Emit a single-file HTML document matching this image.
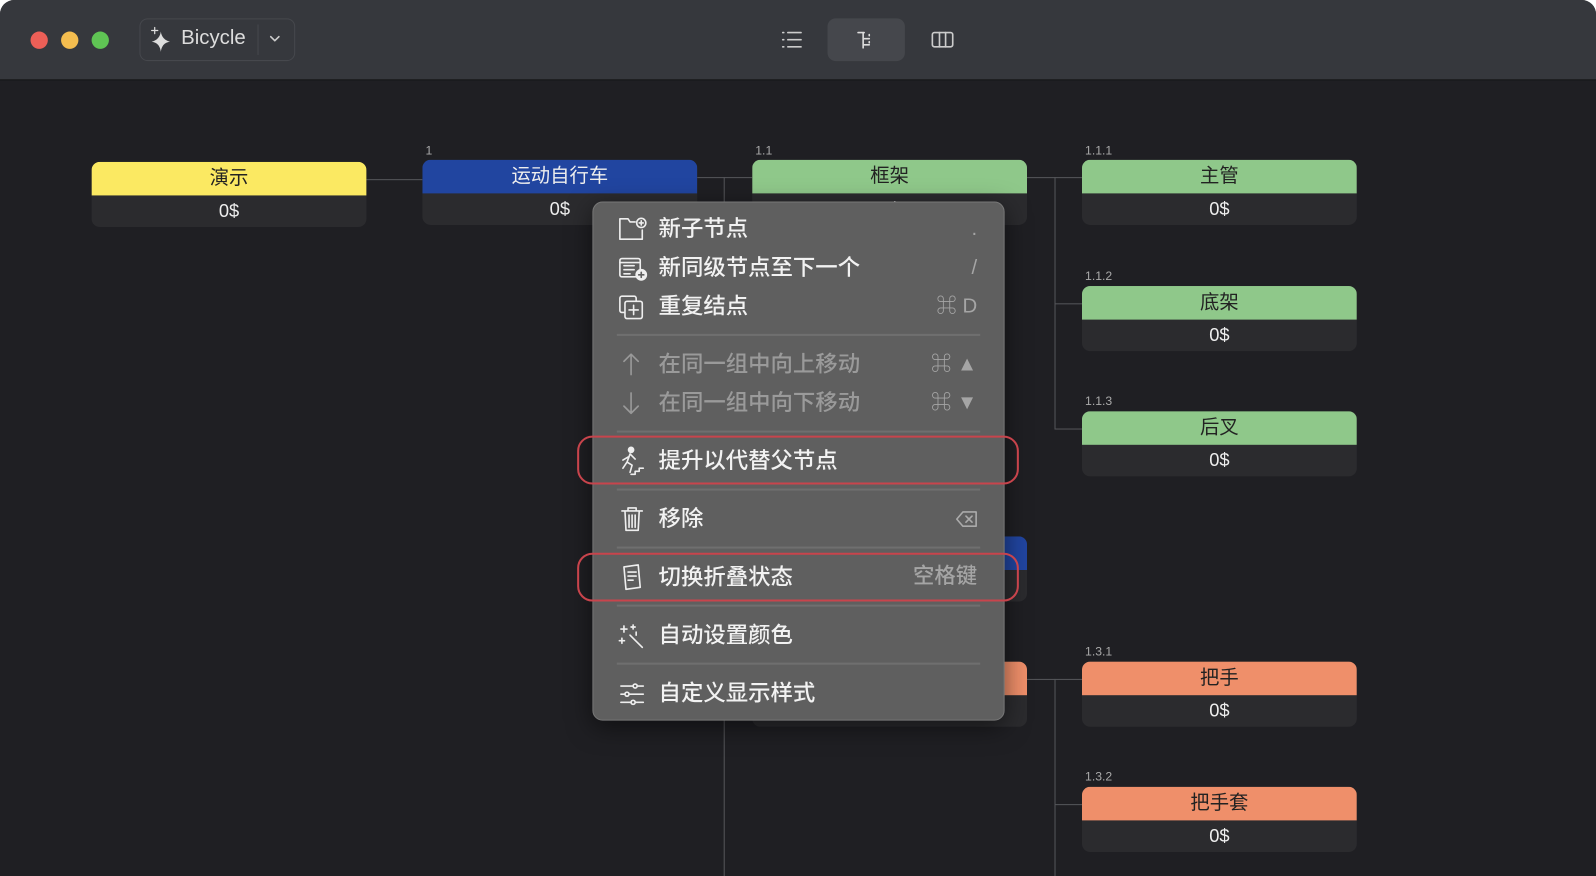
<!DOCTYPE html>
<html><head><meta charset="utf-8"><style>
*{box-sizing:border-box;margin:0;padding:0}
body{width:1596px;height:876px;background:#fff;overflow:hidden;font-family:"Liberation Sans","Noto Sans CJK SC",sans-serif;position:relative}
.sc0{position:absolute;left:0;top:0;width:1568px;height:861px;transform:scale(1.01786);transform-origin:0 0}
.win{position:absolute;left:0;top:0;width:1568px;height:861px;border-radius:14px 14px 0 0;overflow:hidden;background:#1f1f23}
.tb{position:absolute;left:0;top:0;width:100%;height:79px;background:#36383d;border-bottom:1px solid #111}
.dot{position:absolute;top:31px;width:17px;height:17px;border-radius:50%}
.ab{position:absolute}
.node{position:absolute;width:270px;border-radius:8px;overflow:hidden;background:#2b2b2e}
.node .h{height:33px;line-height:33px;text-align:center;font-size:19px;color:#222}
.node .b{height:31px;line-height:30px;text-align:center;font-size:18px;color:#eee}
.lbl{position:absolute;font-size:12px;color:#aaa}
.ln{position:absolute;background:#55565a}
.menu{position:absolute;left:582px;top:198px;width:405px;height:510px;background:#5f5f5f;border:1px solid #777;border-radius:10px;box-shadow:0 6px 24px rgba(0,0,0,.5)}
.it{position:absolute;left:647px;font-size:22px;color:#f2f2f2;line-height:30px;font-weight:500}
.dim{color:#9a9a9a}
.sc{position:absolute;right:608px;font-size:20px;color:#a5a5a5;line-height:30px;text-align:right;font-weight:500}
.sep{position:absolute;left:606px;width:357px;height:2px;background:#6f6f6f}
.red{position:absolute;left:567px;width:434px;height:48px;border:2px solid #c8444c;border-radius:15px}
svg.i{position:absolute;fill:none;stroke:#eee;stroke-width:1.6;stroke-linecap:round;stroke-linejoin:round}
</style></head><body>
<div class="sc0">
<div class="win">
<div class="tb">
<div class="dot" style="left:30px;background:#ec5f57"></div>
<div class="dot" style="left:60px;background:#f4bd4f"></div>
<div class="dot" style="left:90px;background:#5fc454"></div>
<div class="ab" style="left:137px;top:18px;width:153px;height:42px;border:1px solid #46484d;border-radius:8px"></div>
<div class="ab" style="left:253px;top:24px;width:1px;height:30px;background:#46484d"></div>
<svg class="i" style="left:145px;top:25px" width="28" height="28" viewBox="0 0 28 28"><path d="M13 6 Q14 14 22 16 Q14 17 13 26 Q12 17 4 16 Q12 14 13 6Z" fill="#ddd" stroke="none"/><path d="M7 2v6M4 5h6" stroke="#ddd" stroke-width="1.2"/></svg>
<div class="ab" style="left:178px;top:26px;font-size:20px;color:#ddd">Bicycle</div>
<svg class="i" style="left:263px;top:33px" width="14" height="12" viewBox="0 0 14 12"><path d="M3 3l4 4 4-4" stroke="#ccc"/></svg>
<svg class="i" style="left:767px;top:29px" width="22" height="20" viewBox="0 0 22 20"><path d="M2 3h1M7 3h13M2 10h1M7 10h13M2 17h1M7 17h13" stroke="#ccc"/></svg>
<div class="ab" style="left:813px;top:18px;width:76px;height:42px;background:#45474c;border-radius:8px"></div>
<svg class="i" style="left:840px;top:29px" width="22" height="22" viewBox="0 0 22 22"><path d="M3 3h6M8 3v15M8 9h6M8 15h6M14 5v1M14 12v1" stroke="#ddd"/></svg>
<svg class="i" style="left:914px;top:29px" width="24" height="20" viewBox="0 0 24 20"><rect x="2" y="3" width="20" height="14" rx="2" stroke="#ccc"/><path d="M9 3v14M15 3v14" stroke="#ccc"/></svg>
</div>

<div class="ln" style="left:360px;top:176px;width:55px;height:1px"></div>
<div class="ln" style="left:684px;top:174px;width:55px;height:1px"></div>
<div class="ln" style="left:711px;top:174px;width:1px;height:702px"></div>
<div class="ln" style="left:1008px;top:174px;width:55px;height:1px"></div>
<div class="ln" style="left:1036px;top:174px;width:1px;height:247px"></div>
<div class="ln" style="left:1036px;top:298px;width:27px;height:1px"></div>
<div class="ln" style="left:1036px;top:421px;width:27px;height:1px"></div>
<div class="ln" style="left:1008px;top:667px;width:55px;height:1px"></div>
<div class="ln" style="left:1036px;top:667px;width:1px;height:209px"></div>
<div class="ln" style="left:1036px;top:790px;width:27px;height:1px"></div>

<div class="node" style="left:90px;top:159px"><div class="h" style="background:#fbe962">演示</div><div class="b">0$</div></div>
<div class="lbl" style="left:418px;top:141px">1</div>
<div class="node" style="left:415px;top:157px"><div class="h" style="background:#2145a0;color:#eee">运动自行车</div><div class="b">0$</div></div>
<div class="lbl" style="left:742px;top:141px">1.1</div>
<div class="node" style="left:739px;top:157px"><div class="h" style="background:#8fc88a">框架</div><div class="b">0$</div></div>
<div class="node" style="left:739px;top:527px"><div class="h" style="background:#2145a0;color:#eee">车把</div><div class="b">0$</div></div>
<div class="node" style="left:739px;top:650px"><div class="h" style="background:#ef8f6a">车把</div><div class="b">0$</div></div>

<div class="lbl" style="left:1066px;top:141px">1.1.1</div>
<div class="node" style="left:1063px;top:157px"><div class="h" style="background:#8fc88a">主管</div><div class="b">0$</div></div>
<div class="lbl" style="left:1066px;top:264px">1.1.2</div>
<div class="node" style="left:1063px;top:281px"><div class="h" style="background:#8fc88a">底架</div><div class="b">0$</div></div>
<div class="lbl" style="left:1066px;top:387px">1.1.3</div>
<div class="node" style="left:1063px;top:404px"><div class="h" style="background:#8fc88a">后叉</div><div class="b">0$</div></div>
<div class="lbl" style="left:1066px;top:633px">1.3.1</div>
<div class="node" style="left:1063px;top:650px"><div class="h" style="background:#ef8f6a">把手</div><div class="b">0$</div></div>
<div class="lbl" style="left:1066px;top:756px">1.3.2</div>
<div class="node" style="left:1063px;top:773px"><div class="h" style="background:#ef8f6a">把手套</div><div class="b">0$</div></div>

<div class="menu"></div>
<svg class="i" style="left:606px;top:212px" width="32" height="28" viewBox="0 0 32 28"><path d="M18 6H13l-2-3H3v20h22v-9"/><circle cx="24" cy="7" r="4.5"/><path d="M24 5v4M22 7h4"/></svg>
<div class="it" style="top:210px">新子节点</div><div class="sc" style="top:210px">.</div>
<svg class="i" style="left:606px;top:250px" width="32" height="28" viewBox="0 0 32 28"><rect x="3" y="4" width="20" height="18" rx="2"/><path d="M7 11h10M7 15h10M7 19h6M3 8h20"/><circle cx="24" cy="20" r="5" fill="#eee"/><path d="M24 17.5v5M21.5 20h5" stroke="#5f5f5f"/></svg>
<div class="it" style="top:248px">新同级节点至下一个</div><div class="sc" style="top:248px">/</div>
<svg class="i" style="left:606px;top:288px" width="32" height="28" viewBox="0 0 32 28"><path d="M7 19H5a2 2 0 0 1-2-2V5a2 2 0 0 1 2-2h12a2 2 0 0 1 2 2v2"/><rect x="8" y="8" width="17" height="17" rx="2"/><path d="M16.5 12v9M12 16.5h9"/></svg>
<div class="it" style="top:286px">重复结点</div><div class="sc" style="top:286px">⌘ D</div>
<div class="sep" style="top:328px"></div>
<svg class="i" style="left:608px;top:345px" width="24" height="26" viewBox="0 0 24 26"><path d="M12 3v20M5 10l7-7 7 7" stroke="#999"/></svg>
<div class="it dim" style="top:343px">在同一组中向上移动</div><div class="sc" style="top:343px">⌘ ▲</div>
<svg class="i" style="left:608px;top:383px" width="24" height="26" viewBox="0 0 24 26"><path d="M12 3v20M5 16l7 7 7-7" stroke="#999"/></svg>
<div class="it dim" style="top:381px">在同一组中向下移动</div><div class="sc" style="top:381px">⌘ ▼</div>
<div class="sep" style="top:423px"></div>
<svg class="i" style="left:606px;top:437px" width="30" height="32" viewBox="0 0 30 32"><circle cx="14" cy="5" r="2.5" fill="#eee"/><path d="M13 9l-3 8 5 3-2 7M13 9l5 5M11 12l-5 3M10 17l-4 6M14 29h4v-3h4v-3h4"/></svg>
<div class="it" style="top:438px">提升以代替父节点</div>
<div class="sep" style="top:480px"></div>
<svg class="i" style="left:608px;top:496px" width="26" height="28" viewBox="0 0 26 28"><path d="M3 6h20M9 6V3h8v3M6 6l1 19h12l1-19M10 10v12M13 10v12M16 10v12"/></svg>
<div class="it" style="top:495px">移除</div>
<svg class="i" style="left:938px;top:500px" width="24" height="20" viewBox="0 0 24 20"><path d="M8 3h13v14H8l-6-7z" stroke="#aaa"/><path d="M11 7l6 6M17 7l-6 6" stroke="#aaa"/></svg>
<div class="sep" style="top:537px"></div>
<svg class="i" style="left:608px;top:553px" width="26" height="28" viewBox="0 0 26 28"><path d="M5 4l14-2 2 22-14 2zM9 9h8M9 13h8M9 17h5"/></svg>
<div class="it" style="top:552px">切换折叠状态</div><div class="sc" style="top:552px;font-size:21px">空格键</div>
<div class="sep" style="top:594px"></div>
<svg class="i" style="left:606px;top:611px" width="28" height="28" viewBox="0 0 28 28"><path d="M13 13l12 12M7 4v6M4 7h6M16 3v4M14 5h4M5 16v5M2.5 18.5h5M19 10v3" /></svg>
<div class="it" style="top:609px">自动设置颜色</div>
<div class="sep" style="top:651px"></div>
<svg class="i" style="left:607px;top:670px" width="28" height="24" viewBox="0 0 28 24"><path d="M3 4h22M3 12h22M3 20h22"/><circle cx="17" cy="4" r="2" fill="#5f5f5f"/><circle cx="9" cy="12" r="2" fill="#5f5f5f"/><circle cx="15" cy="20" r="2" fill="#5f5f5f"/></svg>
<div class="it" style="top:666px">自定义显示样式</div>

<div class="red" style="top:428px"></div>
<div class="red" style="top:543px"></div>
</div>
</div>
</body></html>
